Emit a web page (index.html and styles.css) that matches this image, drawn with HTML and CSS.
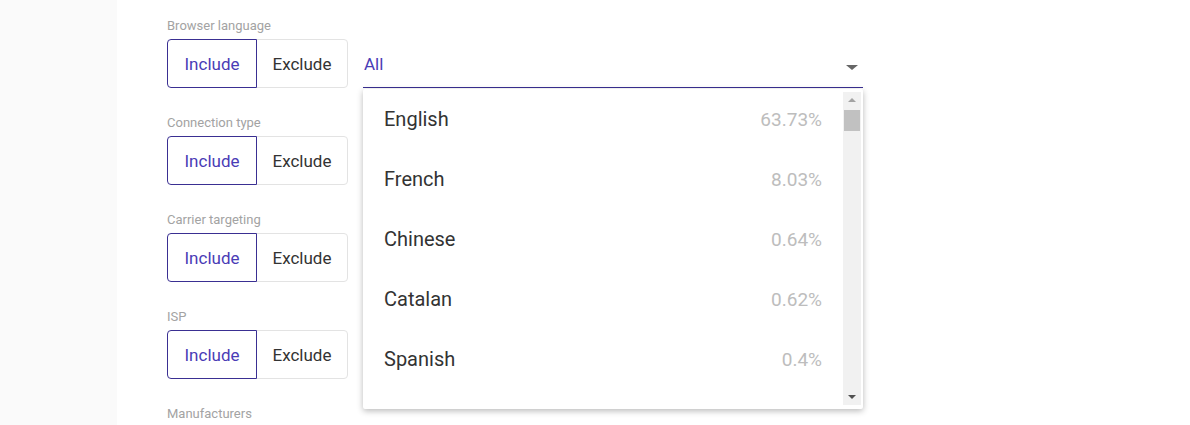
FILE: index.html
```html
<!DOCTYPE html>
<html lang="en">
<head>
  <meta charset="UTF-8">
  <title>Targeting</title>
  <link rel="stylesheet" href="styles.css">
</head>
<body>
  <div class="page">
    <div class="gutter"></div>
    <div class="main">

      <!-- Browser language -->
      <div class="group">
        <div class="label">Browser language</div>
        <div class="controls">
          <div class="toggle">
            <button class="opt active">Include</button>
            <button class="opt">Exclude</button>
          </div>
          <div class="select-wrap">
            <div class="select">
              <span class="value">All</span>
              <span class="caret"></span>
            </div>
            <div class="menu">
              <ul class="menu-list">
                <li><span>English</span><span class="pct">63.73%</span></li>
                <li><span>French</span><span class="pct">8.03%</span></li>
                <li><span>Chinese</span><span class="pct">0.64%</span></li>
                <li><span>Catalan</span><span class="pct">0.62%</span></li>
                <li><span>Spanish</span><span class="pct">0.4%</span></li>
              </ul>
              <div class="scrollbar">
                <span class="arrow up"></span>
                <div class="track"><div class="thumb"></div></div>
                <span class="arrow down"></span>
              </div>
            </div>
          </div>
        </div>
      </div>

      <!-- Connection type -->
      <div class="group">
        <div class="label">Connection type</div>
        <div class="toggle">
          <button class="opt active">Include</button>
          <button class="opt">Exclude</button>
        </div>
      </div>

      <!-- Carrier targeting -->
      <div class="group">
        <div class="label">Carrier targeting</div>
        <div class="toggle">
          <button class="opt active">Include</button>
          <button class="opt">Exclude</button>
        </div>
      </div>

      <!-- ISP -->
      <div class="group">
        <div class="label">ISP</div>
        <div class="toggle">
          <button class="opt active">Include</button>
          <button class="opt">Exclude</button>
        </div>
      </div>

      <div class="group">
        <div class="label">Manufacturers</div>
      </div>

    </div>
  </div>
</body>
</html>
```

FILE: styles.css
```css
html, body {
  margin: 0;
  height: 100%;
  overflow: hidden;
}

body {
  font-family: Roboto, "Noto Sans", Arial, sans-serif;
  background-color: #fff;
  color: #333;
}

.page {
  display: flex;
  height: 100%;
}

.gutter {
  width: 117px;
  background-color: #fafafa;
  flex-shrink: 0;
}

.main {
  flex: 1;
  padding: 17px 0 0 50px;
}

.group {
  margin-bottom: 26px;
}

.label {
  font-size: 13px;
  line-height: 18px;
  color: #a3a3a3;
  margin-bottom: 4px;
}

.controls {
  display: flex;
  align-items: flex-start;
}

.toggle {
  display: flex;
  height: 49px;
}

.opt {
  font-family: inherit;
  font-size: 17px;
  background: #fff;
  color: #333;
  border: 1px solid #e3e3e3;
  padding: 0;
  margin: 0;
  cursor: pointer;
}

.opt.active {
  width: 90px;
  color: #4a3cb6;
  border-color: #3a2f92;
  border-radius: 4px 0 0 4px;
  position: relative;
  z-index: 1;
}

.opt + .opt {
  width: 92px;
  margin-left: -1px;
  border-radius: 0 4px 4px 0;
}

.select-wrap {
  position: relative;
  margin-left: 15px;
  width: 500px;
}

.select {
  height: 49px;
  border-bottom: 1px solid #3a2f92;
  display: flex;
  align-items: center;
  justify-content: space-between;
  padding: 2px 5px 0 1px;
  box-sizing: border-box;
}

.value {
  font-size: 17px;
  color: #4a3cb6;
}

.caret {
  width: 0;
  height: 0;
  border-left: 6px solid transparent;
  border-right: 6px solid transparent;
  border-top: 5px solid #666;
  margin-top: 7px;
}

.menu {
  position: absolute;
  top: 50px;
  left: 0;
  width: 500px;
  height: 320px;
  background: #fff;
  box-shadow: 0 2px 6px rgba(0, 0, 0, 0.28);
  border-radius: 2px;
  display: flex;
  z-index: 5;
}

.menu-list {
  list-style: none;
  margin: 0;
  padding: 0;
  flex: 1;
  overflow: hidden;
}

.menu-list li {
  height: 60px;
  display: flex;
  align-items: center;
  justify-content: space-between;
  padding: 0 21px 0 21px;
  font-size: 20px;
  color: #333;
}

.pct {
  font-size: 19px;
  color: #bdbdbd;
}

.scrollbar {
  width: 18px;
  margin: 3px 2px 4px 0;
  background: #f1f1f1;
  display: flex;
  flex-direction: column;
  align-items: center;
}

.arrow {
  width: 0;
  height: 0;
  border-left: 4px solid transparent;
  border-right: 4px solid transparent;
  margin: 6px 0;
}

.arrow.up {
  border-bottom: 4px solid #a3a3a3;
}

.arrow.down {
  border-top: 4px solid #505050;
}

.track {
  flex: 1;
  width: 100%;
  padding-top: 2px;
}

.thumb {
  height: 21px;
  margin: 0 1px;
  background: #c1c1c1;
}
```
